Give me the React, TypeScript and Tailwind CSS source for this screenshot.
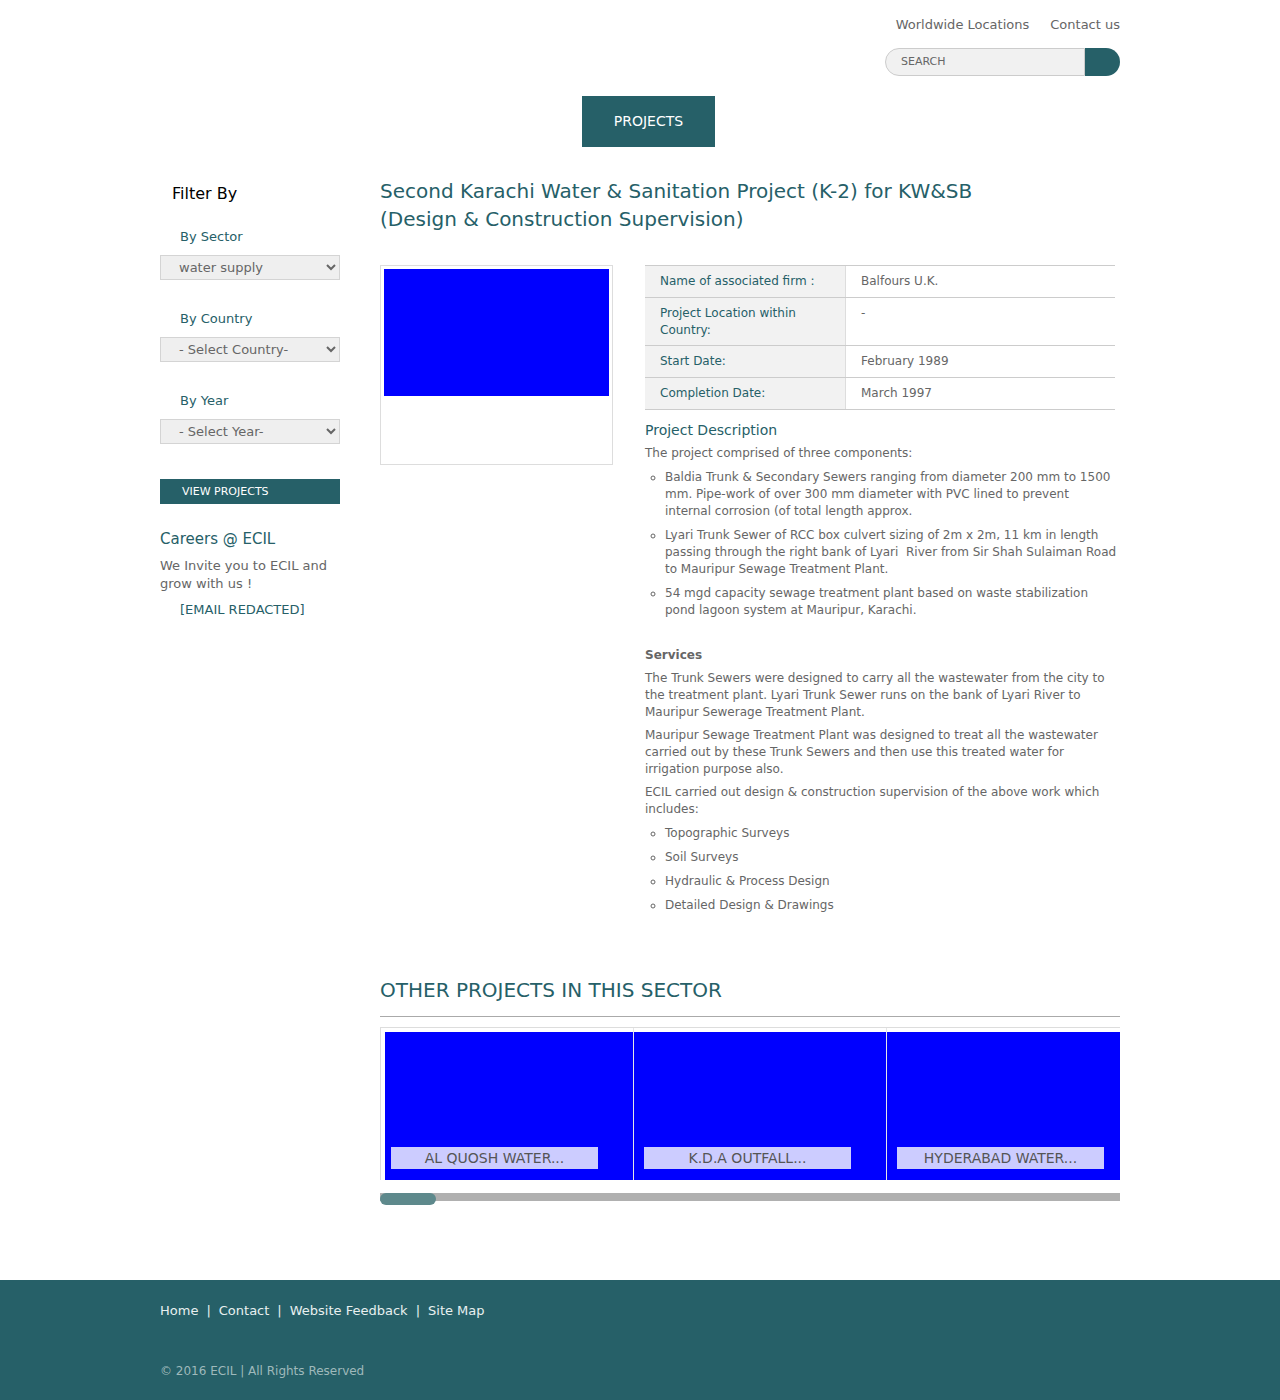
import React from "react";

const teal = "text-[#266068]";

function Select({ value }: { value: string }) {
  return (
    <select
      defaultValue={value}
      className="block w-full h-[25px] bg-[#efefef] border border-[#d4d4d4] text-[13px] text-[#666] pl-[14px] pr-1 outline-none"
    >
      <option>{value}</option>
    </select>
  );
}

function Card({
  title,
  first,
  width,
}: {
  title: string;
  first?: boolean;
  width: number;
}) {
  return (
    <div
      className={
        "shrink-0 border-l pt-[4px] " +
        (first ? "border-[#dddddd] pl-[4px]" : "border-[#e6e6e6]")
      }
    >
      <div className="relative h-[148px] bg-[#0000ff]" style={{ width }}>
        <div
          className={
            "absolute bottom-[11px] w-[207px] h-[22px] bg-[#ccccff] text-[#555] text-[14px] leading-[22px] text-center uppercase " +
            (first ? "left-[6px]" : "left-[10px]")
          }
        >
          {title}
        </div>
      </div>
    </div>
  );
}

export default function App() {
  return (
    <div
      className="min-h-[1400px] bg-white text-[#666]"
      style={{ fontFamily: '"DejaVu Sans", Verdana, sans-serif' }}
    >
      <div className="w-[960px] mx-auto">
        {/* Header */}
        <div className="pt-[17px] flex justify-end gap-[21px] text-[13px] leading-[16px] text-[#666]">
          <span>Worldwide Locations</span>
          <span>Contact us</span>
        </div>
        <div className="mt-[15px] flex justify-end">
          <div className="w-[200px] h-[28px] rounded-l-full border border-[#cccccc] bg-[#f1f1f1] pl-[15px] text-[11px] leading-[26px] text-[#666]">
            SEARCH
          </div>
          <div className="w-[35px] h-[28px] rounded-r-full bg-[#266068]" />
        </div>
        <div className="mt-[20px] ml-[422px] w-[133px] h-[51px] bg-[#266068] text-white text-[14px] flex items-center justify-center">
          PROJECTS
        </div>

        {/* Content */}
        <div className="mt-[30px] flex">
          {/* Sidebar */}
          <div className="w-[180px] shrink-0 pt-[5px]">
            <div className="pl-[12px] text-[16px] leading-[24px] text-black">Filter By</div>
            <div className={"mt-[22px] pl-[20px] text-[13px] leading-[18px] " + teal}>By Sector</div>
            <div className="mt-[9px]">
              <Select value="water supply" />
            </div>
            <div className={"mt-[30px] pl-[20px] text-[13px] leading-[18px] " + teal}>By Country</div>
            <div className="mt-[9px]">
              <Select value="- Select Country-" />
            </div>
            <div className={"mt-[30px] pl-[20px] text-[13px] leading-[18px] " + teal}>By Year</div>
            <div className="mt-[9px]">
              <Select value="- Select Year-" />
            </div>
            <div className="mt-[35px] h-[25px] bg-[#266068] text-white text-[11px] leading-[25px] pl-[22px]">
              VIEW PROJECTS
            </div>
            <div className={"mt-[25px] text-[15px] leading-[20px] " + teal}>Careers @ ECIL</div>
            <div className="mt-[8px] text-[13px] leading-[18px] text-[#666]">
              We Invite you to ECIL and
              <br />
              grow with us !
            </div>
            <div className={"mt-[8px] pl-[20px] text-[13px] leading-[18px] " + teal}>[EMAIL REDACTED]</div>
          </div>

          {/* Main */}
          <div className="ml-[40px] w-[740px]">
            <h1 className={"text-[20px] leading-[28px] font-normal " + teal}>
              Second Karachi Water &amp; Sanitation Project (K-2) for KW&amp;SB
              <br />
              (Design &amp; Construction Supervision)
            </h1>

            <div className="mt-[32px] flex">
              <div className="w-[233px] h-[200px] shrink-0 border border-[#dddddd] p-[3px]">
                <div className="w-[225px] h-[127px] bg-[#0000ff]" />
              </div>
              <div className="ml-[32px] w-[475px] text-[12px] leading-[17px] text-[#666]">
                <div className="w-[470px] border-b border-[#cccccc] leading-[16.8px]">
                  {[
                    ["Name of associated firm :", "Balfours U.K."],
                    ["Project Location within Country:", "-"],
                    ["Start Date:", "February 1989"],
                    ["Completion Date:", "March 1997"],
                  ].map(([k, v]) => (
                    <div key={k} className="flex border-t border-[#cccccc]">
                      <div className={"w-[201px] shrink-0 bg-[#f2f2f2] border-r border-[#dddddd] px-[15px] py-[7px] " + teal}>
                        {k}
                      </div>
                      <div className="px-[15px] py-[7px] text-[#666]">{v}</div>
                    </div>
                  ))}
                </div>

                <div className={"mt-[10px] text-[14px] leading-[20px] " + teal}>Project Description</div>
                <p className="mt-[5px]">The project comprised of three components:</p>
                <ul className="mt-[7px] list-[circle] pl-[20px] pr-[3px] flex flex-col gap-[7px]">
                  <li>
                    Baldia Trunk &amp; Secondary Sewers ranging from diameter 200 mm to 1500 mm. Pipe-work of over 300 mm diameter with PVC lined to prevent internal corrosion (of total length approx.
                  </li>
                  <li className="-mr-[3px]">
                    Lyari Trunk Sewer of RCC box culvert sizing of 2m x 2m, 11 km in length passing through the right bank of Lyari&nbsp; River from Sir Shah Sulaiman Road to Mauripur Sewage Treatment Plant.
                  </li>
                  <li>
                    54 mgd capacity sewage treatment plant based on waste stabilization pond lagoon system at Mauripur, Karachi.
                  </li>
                </ul>

                <div className="mt-[28px] font-bold">Services</div>
                <p className="mt-[6px]">
                  The Trunk Sewers were designed to carry all the wastewater from the city to the treatment plant. Lyari Trunk Sewer runs on the bank of Lyari River to Mauripur Sewerage Treatment Plant.
                </p>
                <p className="mt-[6px]">
                  Mauripur Sewage Treatment Plant was designed to treat all the wastewater carried out by these Trunk Sewers and then use this treated water for irrigation purpose also.
                </p>
                <p className="mt-[6px]">
                  ECIL carried out design &amp; construction supervision of the above work which includes:
                </p>
                <ul className="mt-[7px] list-[circle] pl-[20px] flex flex-col gap-[7px]">
                  <li>Topographic Surveys</li>
                  <li>Soil Surveys</li>
                  <li>Hydraulic &amp; Process Design</li>
                  <li>Detailed Design &amp; Drawings</li>
                </ul>
              </div>
            </div>

            <h2 className={"mt-[62px] text-[20px] leading-[28px] font-normal " + teal}>
              OTHER PROJECTS IN THIS SECTOR
            </h2>
            <div className="mt-[12px] h-px bg-[#aaaaaa]" />
            <div className="mt-[10px] border-t border-[#dddddd] flex overflow-hidden">
              <Card first title="AL QUOSH WATER..." width={248} />
              <Card title="K.D.A OUTFALL..." width={252} />
              <Card title="HYDERABAD WATER..." width={252} />
            </div>
            <div className="relative mt-[13px] h-[12px]">
              <div className="mt-[2px] h-[8px] bg-[#b0b0b0]" />
              <div className="absolute left-0 top-0 w-[56px] h-[12px] rounded-full bg-[#5e898c]" />
            </div>
          </div>
        </div>
      </div>

      {/* Footer */}
      <div className="mt-[75px] h-[120px] bg-[#266068]">
        <div className="w-[960px] mx-auto pt-[22px]">
          <div className="text-[13px] leading-[18px] text-[#e8f0f0]">
            <span>Home</span>
            <span className="px-[8px]">|</span>
            <span>Contact</span>
            <span className="px-[8px]">|</span>
            <span>Website Feedback</span>
            <span className="px-[8px]">|</span>
            <span>Site Map</span>
          </div>
          <div className="mt-[43px] text-[12px] leading-[17px] text-[#9fb9bb]">
            © 2016 ECIL | All Rights Reserved
          </div>
        </div>
      </div>
    </div>
  );
}
